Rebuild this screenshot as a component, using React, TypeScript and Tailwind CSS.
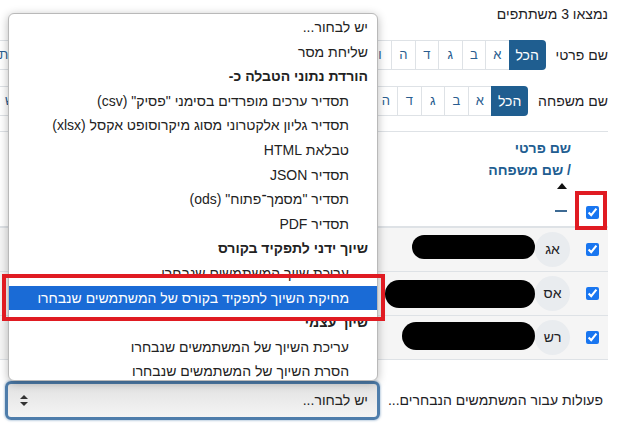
import React from 'react';

const LETTERS = ['א', 'ב', 'ג', 'ד', 'ה', 'ו', 'ז', 'ח', 'ט', 'י', 'כ', 'ל', 'מ', 'נ', 'ס', 'ע', 'פ', 'צ', 'ק', 'ר', 'ש', 'ת'];

type Opt = { label: string; kind: 'opt' | 'group' | 'sub'; active?: boolean };

const OPTIONS: Opt[] = [
  { label: 'יש לבחור...', kind: 'opt' },
  { label: 'שליחת מסר', kind: 'opt' },
  { label: 'הורדת נתוני הטבלה כ-', kind: 'group' },
  { label: 'תסדיר ערכים מופרדים בסימני "פסיק" (csv)', kind: 'sub' },
  { label: 'תסדיר גליון אלקטרוני מסוג מיקרוסופט אקסל (xlsx)', kind: 'sub' },
  { label: 'טבלאת HTML', kind: 'sub' },
  { label: 'תסדיר JSON', kind: 'sub' },
  { label: 'תסדיר "מסמך־פתוח" (ods)', kind: 'sub' },
  { label: 'תסדיר PDF', kind: 'sub' },
  { label: 'שיוך ידני לתפקיד בקורס', kind: 'group' },
  { label: 'עריכת שיוך המשתמשים שנבחרו', kind: 'sub' },
  { label: 'מחיקת השיוך לתפקיד בקורס של המשתמשים שנבחרו', kind: 'sub', active: true },
  { label: 'שיוך עצמי', kind: 'group' },
  { label: 'עריכת השיוך של המשתמשים שנבחרו', kind: 'sub' },
  { label: 'הסרת השיוך של המשתמשים שנבחרו', kind: 'sub' },
];

// redacted names are black marker blobs in the screenshot
const ROWS = [
  { initials: 'אג', blob: 'w-[123px] h-[24px] mb-[6px]' },
  { initials: 'אס', blob: 'w-[150px] h-[28px]' },
  { initials: 'רש', blob: 'w-[133px] h-[28px] mt-[-4px]' },
];

function Check() {
  return <input type="checkbox" defaultChecked readOnly className="m-0 h-[13px] w-[13px] accent-[#1976f0]" />;
}

function InitialsBar({ label, className }: { label: string; className: string }) {
  return (
    <div className={`flex h-[30px] items-center ${className}`}>
      <span className="ml-[10px] shrink-0 whitespace-nowrap">{label}</span>
      <div className="flex h-[30px] shrink-0">
        <span className="flex w-[37px] items-center justify-center rounded-r-[4px] bg-[#1f5e90] text-[14px] text-white">
          הכל
        </span>
        {LETTERS.map((l) => (
          <span
            key={l}
            className="flex w-[23.5px] shrink-0 items-center justify-center border-y border-l border-[#dee2e6] text-[13px] text-[#2a5d8f]"
          >
            {l}
          </span>
        ))}
      </div>
    </div>
  );
}

export default function App() {
  return (
    <div
      dir="rtl"
      className="relative h-[428px] w-[620px] overflow-hidden bg-white font-['Liberation_Sans',Arial,sans-serif] text-[14px] text-[#1d2125]"
    >
      <div className="pr-[12px] pt-[2px]">
        <p className="h-[24px] leading-[24px]">נמצאו 3 משתתפים</p>
        <InitialsBar label="שם פרטי" className="mt-[14px]" />
        <InitialsBar label="שם משפחה" className="mt-[16px]" />

        {/* participants table */}
        <div className="mt-[15px] border-t border-[#dee2e6]">
          <div className="flex h-[96px] border-b-2 border-[#dee2e6]">
            <div className="flex w-[31px] justify-center pt-[74px]">
              <Check />
            </div>
            <div className="pr-[6px] pt-[5px] text-[14px] font-bold leading-[22px] text-[#215d91]">
              <div>שם פרטי</div>
              <div>/ שם משפחה</div>
              <div className="flex h-[10px] items-center pr-[4px]">
                <svg width="10" height="6" viewBox="0 0 10 6">
                  <path d="M0 6 L5 0 L10 6Z" fill="#111" />
                </svg>
              </div>
              <div className="mt-[19px] mr-[4px] h-[2px] w-[12px] bg-[#3d6a93]" />
            </div>
          </div>
          {ROWS.map((r) => (
            <div key={r.initials} className="flex h-[44px] items-center border-b border-[#dee2e6] bg-[#f5f5f5]">
              <div className="flex w-[31px] justify-center">
                <Check />
              </div>
              <div className="mr-[7px] flex h-[35px] w-[35px] shrink-0 items-center justify-center rounded-full bg-[#e9ecef] text-[14px]">
                {r.initials}
              </div>
              <div className={`rounded-full bg-black ${r.blob}`} />
            </div>
          ))}
        </div>

        {/* bulk actions */}
        <div className="mt-[21px] flex items-center">
          <span className="whitespace-nowrap pr-[5px]">פעולות עבור המשתמשים הנבחרים...</span>
          <div className="mr-auto ml-[5px] flex h-[39px] w-[375px] shrink-0 items-center justify-between rounded-[6px] border-[3px] border-[#4e7dab] bg-gradient-to-b from-[#e2e2e2] to-[#f4f4f4] pl-[12px] pr-[9px] shadow-[0_0_2px_1px_rgba(78,125,171,0.35)]">
            <span className="text-[#222]">יש לבחור...</span>
            <svg width="8" height="11" viewBox="0 0 8 11">
              <path d="M4 0 L8 4 H0Z M0 7 H8 L4 11Z" fill="#333" />
            </svg>
          </div>
        </div>
      </div>

      {/* open select popup */}
      <div className="absolute left-[8px] top-[13px] h-[368px] w-[370px] overflow-hidden rounded-[6px] border border-[#b9b9b9] bg-white pt-[1px] text-[14px] text-[#222] shadow-[0_2px_10px_rgba(0,0,0,0.28)]">
        {OPTIONS.map((o) => (
          <div
            key={o.label}
            className={`h-[24.6px] whitespace-nowrap leading-[24.6px] ${o.kind === 'sub' ? 'pr-[28px]' : 'pr-[9px]'} ${
              o.kind === 'group' ? 'font-bold' : ''
            } ${o.active ? 'bg-[#1a6bd6] text-white' : ''}`}
          >
            {o.label}
          </div>
        ))}
      </div>

      {/* red annotation boxes */}
      <div className="absolute left-[2px] top-[274px] h-[47px] w-[383px] border-[4px] border-[#e01b22]" />
      <div className="absolute left-[575px] top-[191px] h-[39px] w-[32px] border-[4px] border-[#e01b22]" />
    </div>
  );
}
